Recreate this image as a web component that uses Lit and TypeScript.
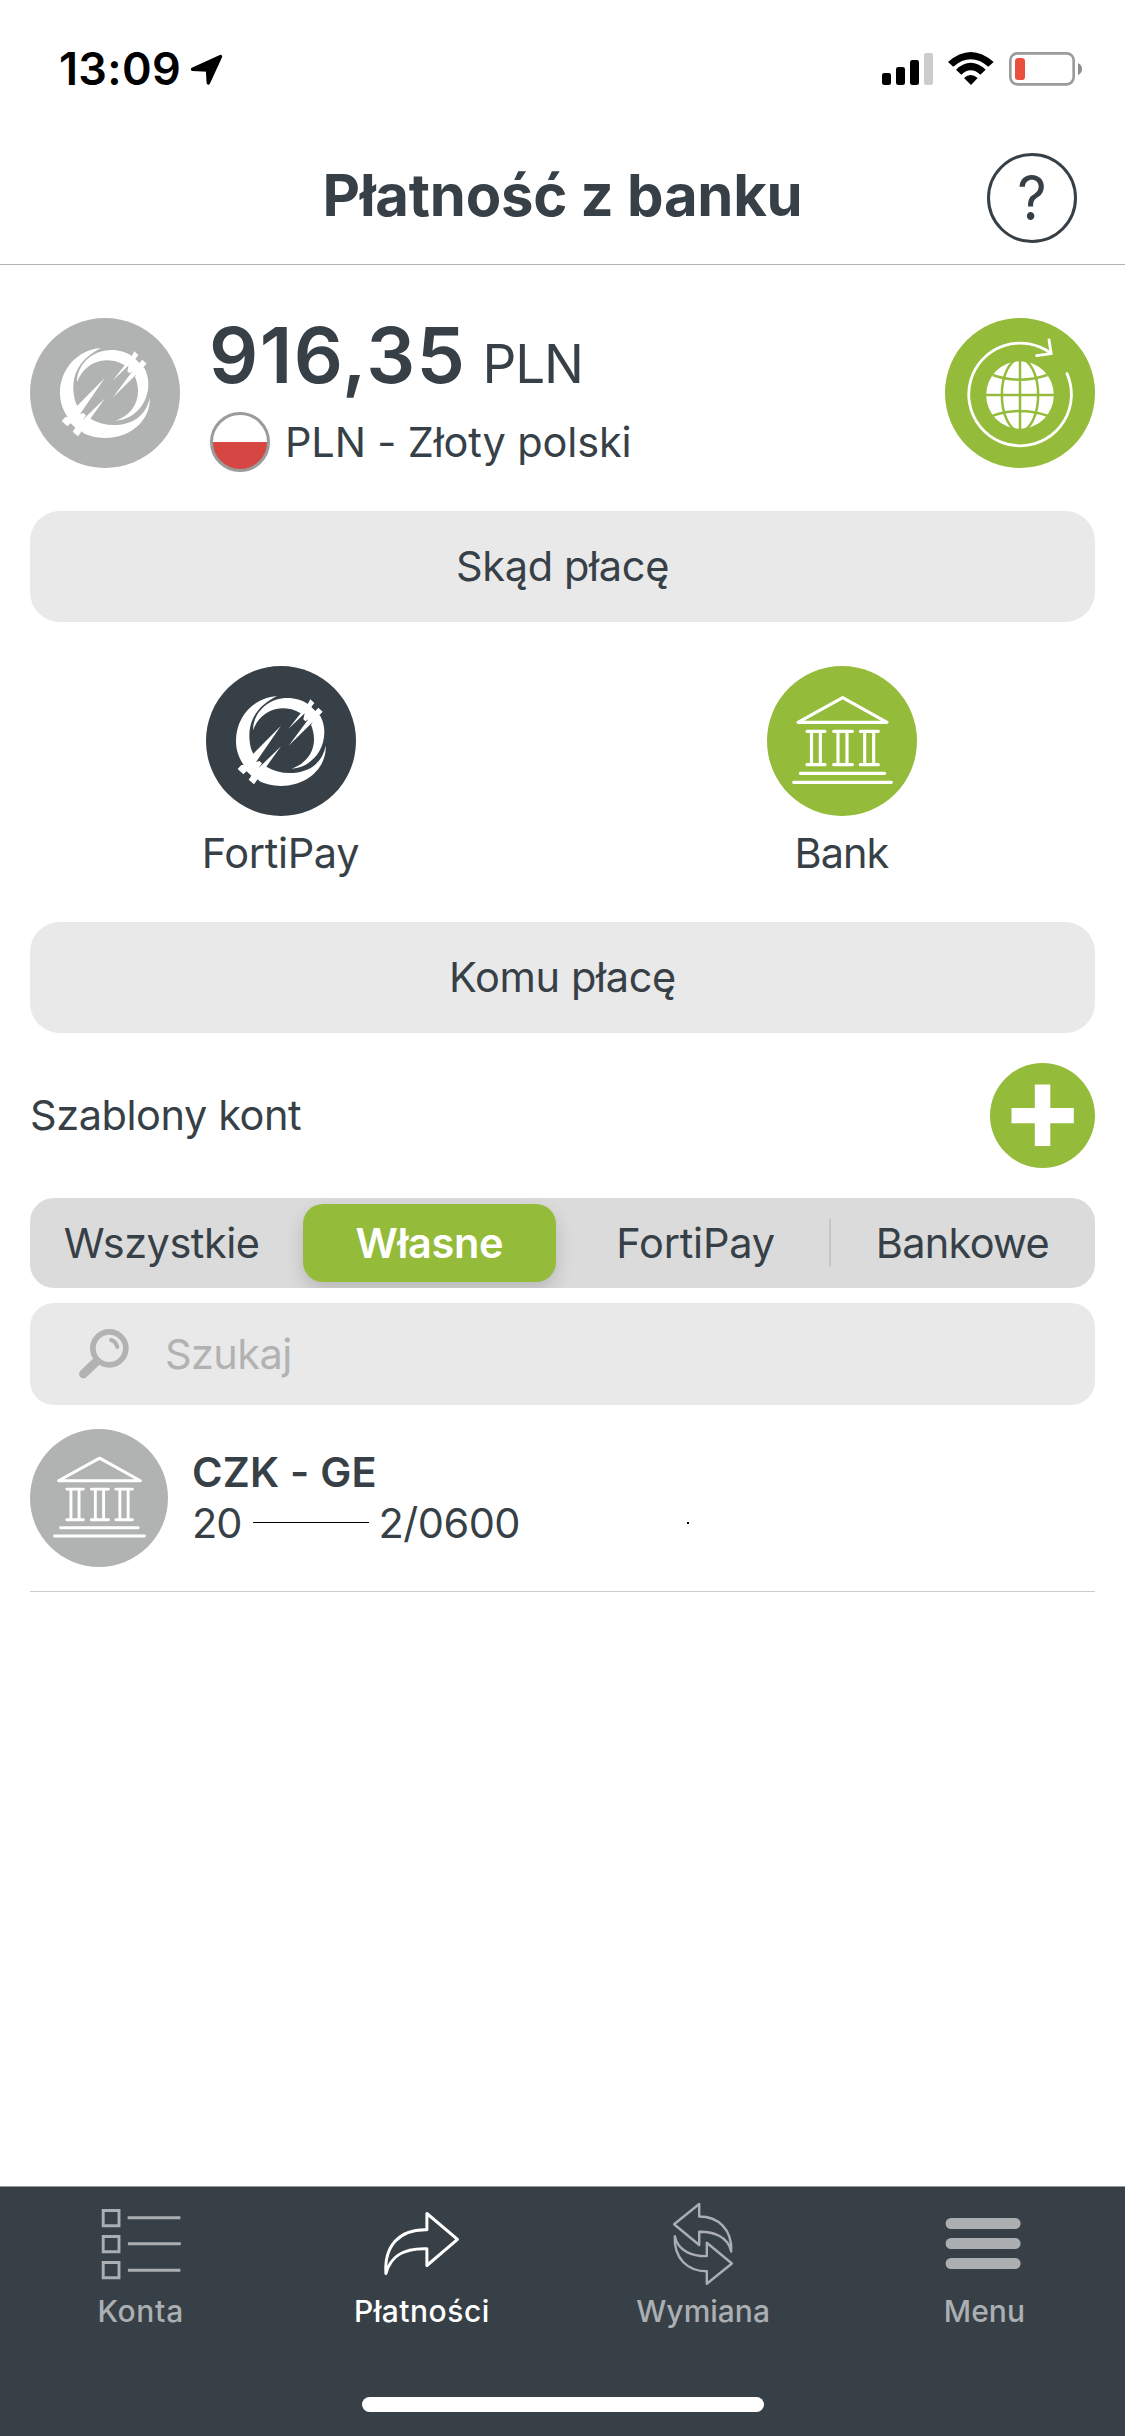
import { LitElement, html, svg, css } from "lit";
import { customElement, property, state } from "lit/decorators.js";
import { classMap } from "lit/directives/class-map.js";

const fortiMark = svg`
  <g fill="#fff">
    <path d="M288 168 C233 196 199 238 206 304 C208 322 212 334 217 341 L300 257 L225 366 L235 363 L243 370 L233 384 L300 319 L256 380 C300 407 358 404 395 380 C416 364 429 344 434 317 C438 378 384 437 300 438 C272 437 252 432 236 424 L230 418 L219 433 L203 419 L211 407 L197 394 L187 403 L170 387 L181 375 L188 375 C173 352 165 330 165 303 C165 232 216 174 288 168 Z"/>
    <path d="M216 271 C216 218 261 174 320 174 C344 174 362 181 376 189 L380 192 L388 178 L400 189 L391 201 L403 213 L412 203 L425 215 L415 226 L418 228 C426 243 430 258 430 277 C430 338 384 384 332 386 C374 372 399 338 399 298 C399 281 395 266 390 254 L396 245 L323 317 L382 238 L373 244 L367 238 L371 220 L322 267 L359 220 C342 209 322 205 304 205 C263 206 231 231 216 271 Z"/>
  </g>`;

const bankMark = svg`
  <g fill="none" stroke="#fff" stroke-width="9.500" stroke-linecap="round" stroke-linejoin="round">
    <path d="M174 247 L308 173 L441 247 Z"/>
    <path d="M201 274H255M281 274H337M361 274H415M201 374H255M281 374H337M361 374H415M181 400H434M161 427H454"/>
    <path d="M214.500 276V372M241 276V372M294 276V372M321 276V372M374 276V372M401 276V372" stroke-linecap="butt"/>
  </g>`;

const globeMark = svg`
  <circle cx="300" cy="315" r="101.500" fill="#fff"/>
  <g fill="none" stroke="#94bb3a" stroke-width="7.500">
    <path d="M300 208V422M193 315H407M218 255Q300 283 382 255M218 377Q300 349 382 377"/>
    <ellipse cx="300" cy="315" rx="54.500" ry="108"/>
  </g>
  <g fill="none" stroke="#fff" stroke-width="8.500" stroke-linecap="round">
    <path d="M441 251A154 154 0 1 1 391 189"/>
    <path d="M387 150L393.500 191L350 197"/>
  </g>`;

type Mark = "forti" | "bank" | "globe";
const marks = {
  forti: { box: "75 78 450 450", art: fortiMark },
  bank: { box: "81 78 450 450", art: bankMark },
  globe: { box: "75 84 450 450", art: globeMark },
};

@customElement("round-icon")
export class RoundIcon extends LitElement {
  @property() mark: Mark = "forti";

  static styles = css`
    :host { display: block; flex: none; border-radius: 50%; overflow: hidden; }
    svg { display: block; width: 100%; height: 100%; }
  `;

  render() {
    const m = marks[this.mark];
    return html`<svg viewBox=${m.box}>${m.art}</svg>`;
  }
}

const tabs = [
  {
    label: "Konta", fit: "wide",
    icon: svg`<svg class="tab-icon" viewBox="90.600 2197 100 94" fill="none" stroke="currentColor" stroke-width="2.900">
      <path d="M102.800 2210.500h15.800v15.200h-15.800zM102.800 2236.500h15.800v15.200h-15.800zM102.800 2262.500h15.800v15.200h-15.800z"/>
      <path d="M127.200 2217.700H180M127.500 2243.700H180.400M127.500 2270.200H180"/></svg>`,
  },
  {
    label: "Płatności", fit: "loose",
    icon: svg`<svg class="tab-icon" viewBox="371.900 2197 100 94" fill="none" stroke="currentColor" stroke-width="3" stroke-linejoin="round">
      <path d="M426.800 2213.500L457.400 2239.400L426.800 2265.500V2248.700C406 2248 391 2254 385.800 2273.500C384 2246 399 2229 426.800 2229.700Z"/></svg>`,
  },
  {
    label: "Wymiana", fit: "",
    icon: svg`<svg class="tab-icon" viewBox="653.100 2197 100 94" fill="none" stroke="currentColor" stroke-width="2.400" stroke-linejoin="round">
      <path d="M699.300 2204L674.200 2224.300L699.300 2245V2231.700C713 2231.500 728 2236 731.300 2251.500C732.500 2229 718 2216.500 699.300 2216.500Z"/>
      <path transform="rotate(180 703.100 2243.900)" d="M699.300 2204L674.200 2224.300L699.300 2245V2231.700C713 2231.500 728 2236 731.300 2251.500C732.500 2229 718 2216.500 699.300 2216.500Z"/></svg>`,
  },
  {
    label: "Menu", fit: "",
    icon: svg`<svg class="tab-icon" viewBox="934.400 2197 100 94" fill="none" stroke="currentColor" stroke-width="11" stroke-linecap="round">
      <path d="M951.500 2223.500H1015.500M951.500 2243.500H1015.500M951.500 2263.500H1015.500"/></svg>`,
  },
];

const filters = [
  { label: "Wszystkie", cls: "f-all" },
  { label: "Własne", cls: "f-own" },
  { label: "FortiPay", cls: "f-forti" },
  { label: "Bankowe", cls: "f-bank" },
];

@customElement("app-root")
export class AppRoot extends LitElement {
  @state() private filter = 1;
  @state() private tab = 1;

  static styles = css`
    :host { display: block; width: 1125px; height: 2436px; background: #fff; color: #373f47; font-family: Inter, "Liberation Sans", sans-serif; font-size: 41.5px; line-height: 50px; white-space: nowrap; }
    * { box-sizing: border-box; }
    svg { display: block; flex: none; }
    .screen { display: flex; flex-direction: column; height: 2436px; }
    .status { display: flex; height: 140px; padding: 0 30px 0 59px; align-items: center; color: #000; }
    .clock { font-size: 45px; font-weight: 600; letter-spacing: 0.3px; width: 131px; height: 52px; }
    .signals { margin-left: auto; }
    .header { display: grid; grid-template-columns: 138px 1fr 138px; height: 125px; border-bottom: 1px solid #b2b2b2; }
    .title { font-size: 58px; font-weight: 700; letter-spacing: -0.25px; line-height: 70px; margin: 20px 0 0; text-align: center; grid-column: 2; }
    .help { width: 90px; height: 90px; margin-top: 13px; border: 3px solid #373f47; border-radius: 50%; font: 400 62px/84px Inter, sans-serif; text-align: center; color: inherit; background: none; padding: 0; }
    .help-sign { display: block; transform: scaleX(0.93); }
    .balance { display: flex; padding: 53px 30px 0; height: 246px; }
    .grey { background: #b1b3b2; }
    .dark { background: #373f47; }
    .green { background: #94bb3a; }
    .big { width: 150px; height: 150px; }
    .money { display: flex; flex-direction: column; gap: 19px; flex: 1; padding-left: 30px; }
    .amount { display: flex; align-items: baseline; height: 75px; font-size: 77px; line-height: 75px; font-weight: 600; letter-spacing: 1.45px; margin-left: -1px; }
    .unit { font-size: 53px; font-weight: 400; letter-spacing: -1.1px; padding-left: 16px; }
    .currency { display: flex; align-items: center; height: 60px; letter-spacing: -0.15px; gap: 15px; }
    .flag { width: 60px; height: 60px; border: 3px solid #9b9b9b; border-radius: 50%; background: linear-gradient(#fff 50%, #d64743 50%); }
    .bar { margin: 0 30px; height: 111px; border-radius: 30px; background: #e9e9e9; text-align: center; line-height: 111px; letter-spacing: -0.35px; }
    .sources { display: grid; grid-template-columns: 1fr 1fr; height: 300px; padding: 44px 3px 0 0; }
    .source { display: flex; flex-direction: column; align-items: center; gap: 12px; letter-spacing: -0.35px; }
    .source:last-child { letter-spacing: -1px; }
    .templates { display: flex; justify-content: space-between; padding: 30px 30px 0; height: 165px; letter-spacing: -0.44px; }
    .templates-title { padding-top: 27px; }
    .add { width: 105px; height: 105px; border-radius: 50%; }
    .segments { display: grid; grid-template-columns: repeat(4, 1fr); margin: 0 30px; height: 90px; border-radius: 24px; background: #dbdbdb; overflow: hidden; }
    .segment { margin: 6px 7px; height: 78px; border-radius: 20px; line-height: 78px; text-align: center; }
    .f-all { letter-spacing: -0.5px; padding-right: 3px; }
    .f-own { letter-spacing: -0.3px; }
    .f-forti { letter-spacing: -0.2px; }
    .f-bank { letter-spacing: -0.75px; padding-left: 1px; }
    .cell.split { background: linear-gradient(#c6c6c6, #c6c6c6) no-repeat 0 21px / 2px 48px; }
    .active { background: #94bb3a; color: #fff; font-weight: 600; box-shadow: 0 8px 18px rgba(0, 0, 0, 0.16); }
    .search { display: flex; align-items: center; margin: 15px 30px 0; height: 102px; border-radius: 24px; background: #e9e9e9; color: #b1b3b2; padding-left: 49px; letter-spacing: -0.6px; gap: 36px; }
    .account { display: flex; margin: 24px 30px 0; height: 163px; border-bottom: 1px solid #cdcdcd; gap: 24px; }
    .small { width: 138px; height: 138px; }
    .name { font-weight: 600; letter-spacing: 0.2px; padding-top: 18px; height: 69px; }
    .number { display: flex; align-items: center; height: 50px; letter-spacing: -0.5px; }
    .first { width: 61px; letter-spacing: -1px; }
    .mask { width: 116px; height: 2px; border-top: 1px solid #000; margin-right: 9.5px; }
    .speck { width: 2px; height: 2px; background: #000; margin-left: 167px; }
    .tabbar { margin-top: auto; height: 250px; background: #373f47; border-top: 1px solid #999; display: flex; flex-direction: column; }
    .tabs { display: grid; grid-template-columns: repeat(4, 1fr); padding-top: 10px; height: 210px; }
    .tab { display: flex; flex-direction: column; align-items: center; gap: 1px; color: #abafb2; font-size: 30px; line-height: 38px; font-weight: 500; }
    .tab-icon { width: 100px; height: 94px; }
    .wide { letter-spacing: 0.7px; }
    .loose { letter-spacing: 0.5px; }
    .current { color: #fff; }
    .home { width: 402px; height: 15px; border-radius: 8px; background: #fff; margin: 0 auto; }
  `;

  render() {
    return html`<div class="screen">
      <div class="status">
        <div class="clock">13:09</div>
        <svg width="34" height="34" viewBox="190 52 34 34"><path d="M220.500 55.500L208.300 82L207.500 69L192.500 68.300Z" stroke="#000" stroke-width="3.400" stroke-linejoin="round"/></svg>
        <svg class="signals" width="225" height="60" viewBox="0 0 675 180">
          <rect x="36" y="99" width="27" height="36" rx="7"/><rect x="78" y="81" width="27" height="54" rx="7"/><rect x="120" y="60" width="27" height="75" rx="7"/><rect x="162" y="39" width="27" height="96" rx="7" fill="#ccc"/>
          <path d="M234 66Q302 6 371 66L355 80Q302 36 250 80Z"/><path d="M258 89Q302 48 347 89L331 104Q302 78 274 104Z"/><path d="M282 114Q302 96 323 114L303 135Z"/>
          <rect x="421" y="40" width="190" height="93" rx="21" fill="none" stroke="#9b9b9b" stroke-width="8"/><rect x="435" y="54" width="30" height="66" rx="10" fill="#ea4e3d"/><path d="M624 69Q636 75 636 87Q636 99 624 105Z" fill="#8c8c8c"/>
        </svg>
      </div>
      <div class="header"><h1 class="title">Płatność z banku</h1><button class="help"><span class="help-sign">?</span></button></div>
      <div class="balance">
        <round-icon class="grey big" mark="forti"></round-icon>
        <div class="money">
          <div class="amount">916,35<span class="unit"> PLN</span></div>
          <div class="currency"><span class="flag"></span>PLN - Złoty polski</div>
        </div>
        <round-icon class="green big" mark="globe"></round-icon>
      </div>
      <div class="bar">Skąd płacę</div>
      <div class="sources">
        <div class="source"><round-icon class="dark big" mark="forti"></round-icon>FortiPay</div>
        <div class="source"><round-icon class="green big" mark="bank"></round-icon>Bank</div>
      </div>
      <div class="bar">Komu płacę</div>
      <div class="templates">
        <div class="templates-title">Szablony kont</div>
        <svg class="add green" viewBox="0 0 105 105"><path d="M44.800 21.500h15.500v23.400h23.500v15.400H60.300v22.700H44.800V60.300H21.500V44.900h23.300z" fill="#fff"/></svg>
      </div>
      <div class="segments">
        ${filters.map((f, i) => html`<div class=${classMap({ cell: true, split: i > this.filter + 1 })}>
          <div class=${classMap({ segment: true, [f.cls]: true, active: i === this.filter })} @click=${() => (this.filter = i)}>${f.label}</div>
        </div>`)}
      </div>
      <div class="search">
        <svg width="50" height="50" viewBox="27 42 150 150" fill="none" stroke="currentColor" stroke-linecap="round">
          <circle cx="118" cy="100" r="49.500" stroke-width="17"/><path d="M78 141L40 177" stroke-width="26"/><path d="M123 75Q138 80 142 96" stroke-width="12"/>
        </svg>Szukaj
      </div>
      <div class="account">
        <round-icon class="grey small" mark="bank"></round-icon>
        <div>
          <div class="name">CZK - GE</div>
          <div class="number"><span class="first">20</span><span class="mask"></span>2/0600<span class="speck"></span></div>
        </div>
      </div>
      <div class="tabbar">
        <div class="tabs">
          ${tabs.map((t, i) => html`<div class="tab ${t.fit} ${i === this.tab ? "current" : ""}" @click=${() => (this.tab = i)}>${t.icon}${t.label}</div>`)}
        </div>
        <div class="home"></div>
      </div>
    </div>`;
  }
}
